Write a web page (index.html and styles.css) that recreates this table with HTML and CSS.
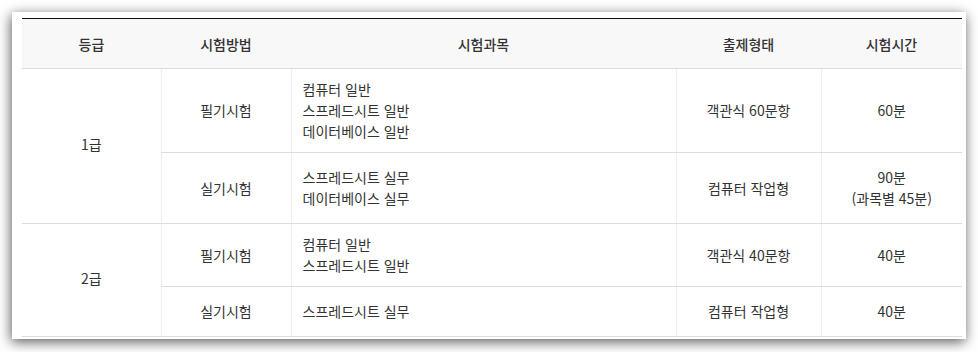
FILE: index.html
```html
<!DOCTYPE html>
<html lang="ko">
<head>
<meta charset="utf-8">
<link rel="stylesheet" href="styles.css">
</head>
<body>
<div class="card">
  <table class="exam">
    <colgroup>
      <col class="c1"><col class="c2"><col class="c3"><col class="c4"><col class="c5">
    </colgroup>
    <thead>
      <tr class="head">
        <th>등급</th><th>시험방법</th><th>시험과목</th><th>출제형태</th><th>시험시간</th>
      </tr>
    </thead>
    <tbody>
      <tr class="r1a">
        <td rowspan="2" class="grade">1급</td>
        <td>필기시험</td>
        <td class="subj">컴퓨터 일반<br>스프레드시트 일반<br>데이터베이스 일반</td>
        <td>객관식 60문항</td>
        <td>60분</td>
      </tr>
      <tr class="r1b">
        <td>실기시험</td>
        <td class="subj">스프레드시트 실무<br>데이터베이스 실무</td>
        <td>컴퓨터 작업형</td>
        <td>90분<br>(과목별 45분)</td>
      </tr>
      <tr class="r2a">
        <td rowspan="2" class="grade">2급</td>
        <td>필기시험</td>
        <td class="subj">컴퓨터 일반<br>스프레드시트 일반</td>
        <td>객관식 40문항</td>
        <td>40분</td>
      </tr>
      <tr class="r2b">
        <td>실기시험</td>
        <td class="subj">스프레드시트 실무</td>
        <td>컴퓨터 작업형</td>
        <td>40분</td>
      </tr>
    </tbody>
  </table>
</div>
</body>
</html>
```

FILE: styles.css
```css
html, body {
  margin: 0;
  padding: 0;
  background: #ffffff;
}

body {
  font-family: "Noto Sans CJK KR", "Noto Sans", sans-serif;
  font-size: 14px;
  color: #333333;
  min-height: 352px;
  padding-top: 12px;
  padding-left: 12px;
  box-sizing: border-box;
}

.card {
  width: 954px;
  padding: 6px 0 2px 10px;
  box-sizing: border-box;
  background: #ffffff;
  box-shadow: -1px 3px 12px rgba(0, 0, 0, 0.65);
}

.exam {
  width: 940px;
  border-collapse: collapse;
  table-layout: fixed;
  border-top: 1px solid #111111;
  border-bottom: 1px solid #dddddd;
}

.c1 { width: 139px; }
.c2 { width: 130px; }
.c3 { width: 385px; }
.c4 { width: 145px; }
.c5 { width: 141px; }

.exam th {
  background: #f8f8f8;
  font-weight: 500;
  color: #333333;
  height: 49px;
  padding: 0;
  border-bottom: 1px solid #dddddd;
  text-align: center;
  vertical-align: middle;
}

.exam td {
  padding: 0 10px;
  line-height: 21px;
  text-align: center;
  vertical-align: middle;
  border-left: 1px solid #eeeeee;
  border-bottom: 1px solid #dddddd;
}

.exam td.grade {
  border-left: none;
  padding-bottom: 4px;
}

.exam td.subj {
  text-align: left;
  padding-left: 11px;
}

.r1a td { height: 83px; }
.r1b td { height: 70px; }
.r2a td { height: 62px; }
.r2b td { height: 49px; }
```
